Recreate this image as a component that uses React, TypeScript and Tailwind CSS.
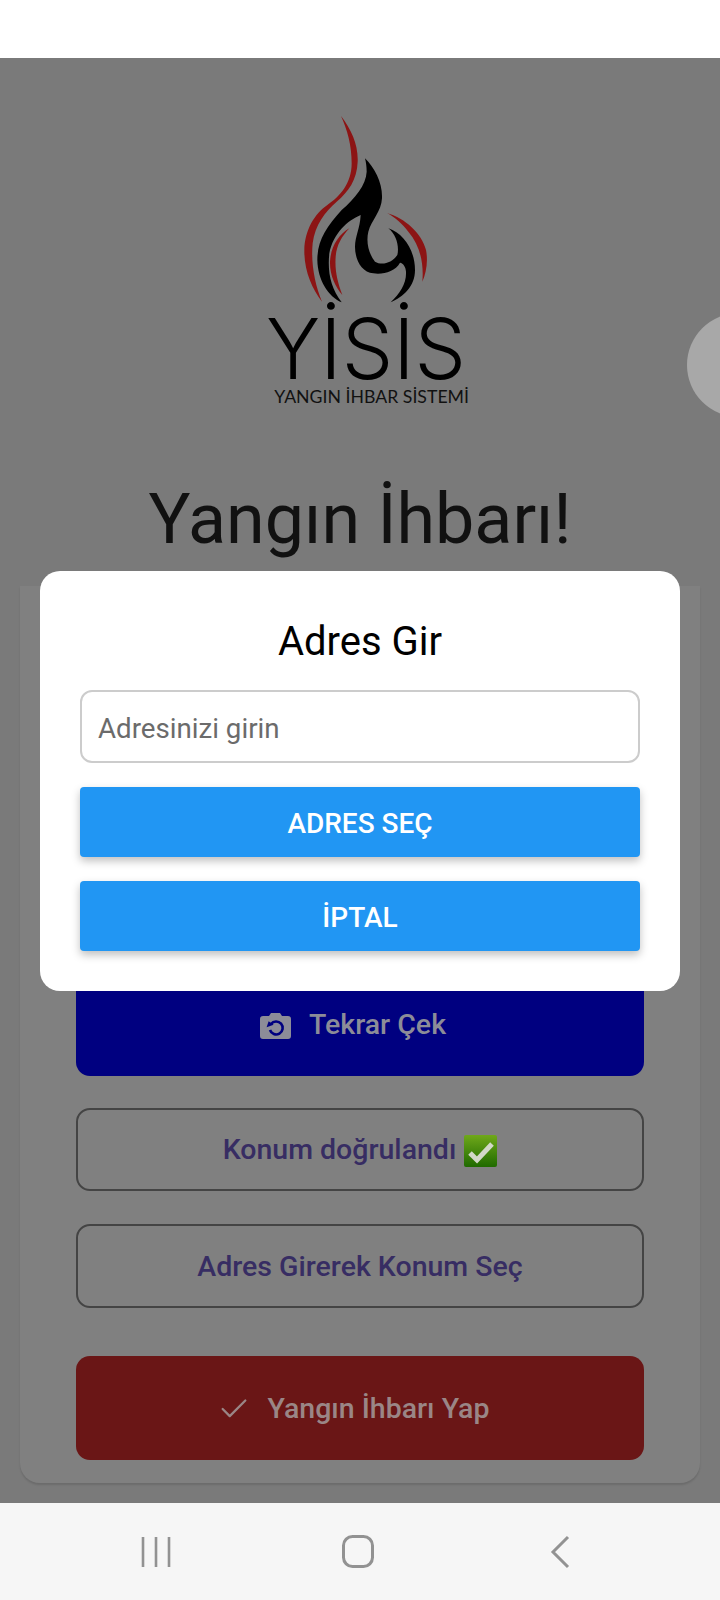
import { Check } from "lucide-react";

function Logo() {
    return (
        <svg width="260" height="320" viewBox="0 0 780 960" className="ml-[20px]">
            {/* flame, traced from the reference */}
            <path
                fill="#8c1414"
                d="M303 48 C335 90 355 135 353 185 C351 240 325 275 290 305 C255 335 225 375 218 430 C212 490 225 555 246 605 C215 565 192 510 193 450 C194 390 225 340 262 315 C300 290 335 250 335 190 C335 135 322 90 303 48 Z"
            />
            <path
                fill="#8c1414"
                d="M328 385 C295 405 272 440 270 485 C269 525 285 560 307 585 C292 545 284 510 287 470 C290 435 305 410 328 385 Z"
            />
            <path
                fill="#8c1414"
                d="M442 340 C495 355 545 400 558 450 C565 485 558 520 547 545 C552 490 540 435 505 395 C487 372 465 352 442 340 Z"
            />
            <path
                fill="#000"
                d="M375 175 C405 205 428 250 426 295 C424 335 395 360 385 395 C378 425 385 460 405 485 C425 497 455 490 472 465 C478 440 470 405 445 385 C490 400 525 450 525 510 C525 560 490 590 452 607 C480 580 500 550 498 515 C497 500 490 490 480 488 C465 515 430 524 400 520 C365 517 345 480 345 440 C345 410 360 385 362 345 C322 362 280 400 268 460 C262 515 272 565 305 607 C265 590 233 540 232 480 C232 420 260 380 305 330 C345 295 378 255 380 215 C380 200 378 187 375 175 Z"
            />
            <text x="78" y="838" textLength="600" lengthAdjust="spacingAndGlyphs" fontFamily="Inter, sans-serif" fontWeight="300" fontSize="252" fill="#000">
                YİSİS
            </text>
            <text x="103" y="908" textLength="584" lengthAdjust="spacingAndGlyphs" fontFamily="Lato, sans-serif" fontSize="50" fill="#111">
                YANGIN İHBAR SİSTEMİ
            </text>
        </svg>
    );
}

function CameraIcon() {
    return (
        <svg width="31" height="27" viewBox="0 0 31 27">
            <path
                fill="#8c8c98"
                d="M3 4 H9 L11 1 H20 L22 4 H28 Q31 4 31 7 V24 Q31 27 28 27 H3 Q0 27 0 24 V7 Q0 4 3 4 Z"
            />
            <path d="M11 12 A6.5 6.5 0 1 1 10 18" fill="none" stroke="#000080" strokeWidth="2.6" />
            <path d="M6 14 L13.5 14 L10 9 Z" fill="#000080" transform="rotate(-20 10 13)" />
        </svg>
    );
}

function CheckEmoji() {
    return (
        <svg width="33" height="32" viewBox="0 0 33 32">
            <defs>
                <linearGradient id="emojiGreen" x1="0" y1="0" x2="0" y2="1">
                    <stop offset="0" stopColor="#6fa81a" />
                    <stop offset="1" stopColor="#1f6a00" />
                </linearGradient>
            </defs>
            <rect width="33" height="32" rx="2" fill="url(#emojiGreen)" />
            <path d="M6 18 L13 25 L28 9" fill="none" stroke="#d2d8c8" strokeWidth="5" />
        </svg>
    );
}

export default function App() {
    return (
        <div className="relative flex h-[1600px] w-[720px] flex-col overflow-hidden bg-white font-['Roboto',sans-serif]">
            {/* Status bar */}
            <div className="h-[58px] shrink-0 bg-white" />

            {/* Screen */}
            <main className="relative flex flex-1 flex-col items-center bg-[#7a7a7a] px-5 pb-5 pt-[42px]">
                <Logo />
                <h1 className="mb-[25px] mt-[57px] text-center text-[70px] font-normal leading-[84px] text-[#111]">
                    Yangın İhbarı!
                </h1>

                <section className="flex w-full flex-1 flex-col justify-end rounded-b-[20px] bg-[#808080] px-14 pb-[23px] shadow-[0_2px_2px_rgba(0,0,0,0.12)]">
                    <button className="flex h-[104px] items-center justify-center gap-[18px] rounded-[14px] bg-[#000080] pr-[14px] pt-[2px] text-[28.5px] font-medium text-[#8c8c98]">
                        <CameraIcon />
                        Tekrar Çek
                    </button>
                    <button className="mt-8 flex h-[83px] items-center justify-center gap-2 rounded-[14px] border-2 border-[#444] pt-[2px] text-[28.5px] font-medium text-[#372d63]">
                        Konum doğrulandı
                        <CheckEmoji />
                    </button>
                    <button className="mt-[33px] flex h-[84px] items-center justify-center rounded-[14px] border-2 border-[#444] pt-[2px] text-[28.5px] font-medium text-[#372d63]">
                        Adres Girerek Konum Seç
                    </button>
                    <button className="mt-[48px] flex h-[104px] items-center justify-center gap-[17px] rounded-[14px] bg-[#6a1616] pr-[14px] pt-[2px] text-[28.5px] font-medium text-[#9a8686]">
                        <Check className="h-[34px] w-[34px]" strokeWidth={1.6} />
                        Yangın İhbarı Yap
                    </button>
                </section>

                {/* Dialog */}
                <div className="absolute inset-0 flex items-center justify-center">
                    <div className="flex w-[640px] flex-col rounded-[20px] bg-white px-10 pb-10 pt-[47px]">
                        <h2 className="pt-[2px] text-center text-[40px] font-normal leading-[44px] text-black">Adres Gir</h2>
                        <input
                            placeholder="Adresinizi girin"
                            className="mt-[26px] h-[73px] rounded-[12px] border-2 border-[#ccc] px-4 pt-1 text-[27.7px] outline-none placeholder:text-[#6b6b6b]"
                        />
                        <button className="mt-6 h-[70px] rounded-[4px] bg-[#2196f3] pt-1 text-[28px] font-medium text-white shadow-[0_4px_8px_rgba(0,0,0,0.25)]">
                            ADRES SEÇ
                        </button>
                        <button className="mt-6 h-[70px] rounded-[4px] bg-[#2196f3] pt-1 text-[28px] font-medium text-white shadow-[0_4px_8px_rgba(0,0,0,0.25)]">
                            İPTAL
                        </button>
                    </div>
                </div>

                {/* Edge panel handle */}
                <div className="absolute right-[-71px] top-[255px] h-[104px] w-[104px] rounded-full bg-[#a8a8a8]" />
            </main>

            {/* Android nav bar */}
            <nav className="grid h-[97px] shrink-0 grid-cols-[202px_202px_202px] items-center justify-items-center bg-[#f6f6f6] pl-[55px]">
                <svg width="32" height="32" viewBox="0 0 32 32" stroke="#929292" strokeWidth="2.6" fill="none">
                    <path d="M3 1 V31 M16 1 V31 M29 1 V31" />
                </svg>
                <svg width="32" height="33" viewBox="0 0 32 33" stroke="#929292" strokeWidth="3" fill="none">
                    <rect x="1.5" y="1.5" width="29" height="30" rx="9" />
                </svg>
                <svg width="20" height="34" viewBox="0 0 20 34" stroke="#929292" strokeWidth="3" fill="none">
                    <path d="M18 2 L3 17 L18 32" />
                </svg>
            </nav>
        </div>
    );
}
